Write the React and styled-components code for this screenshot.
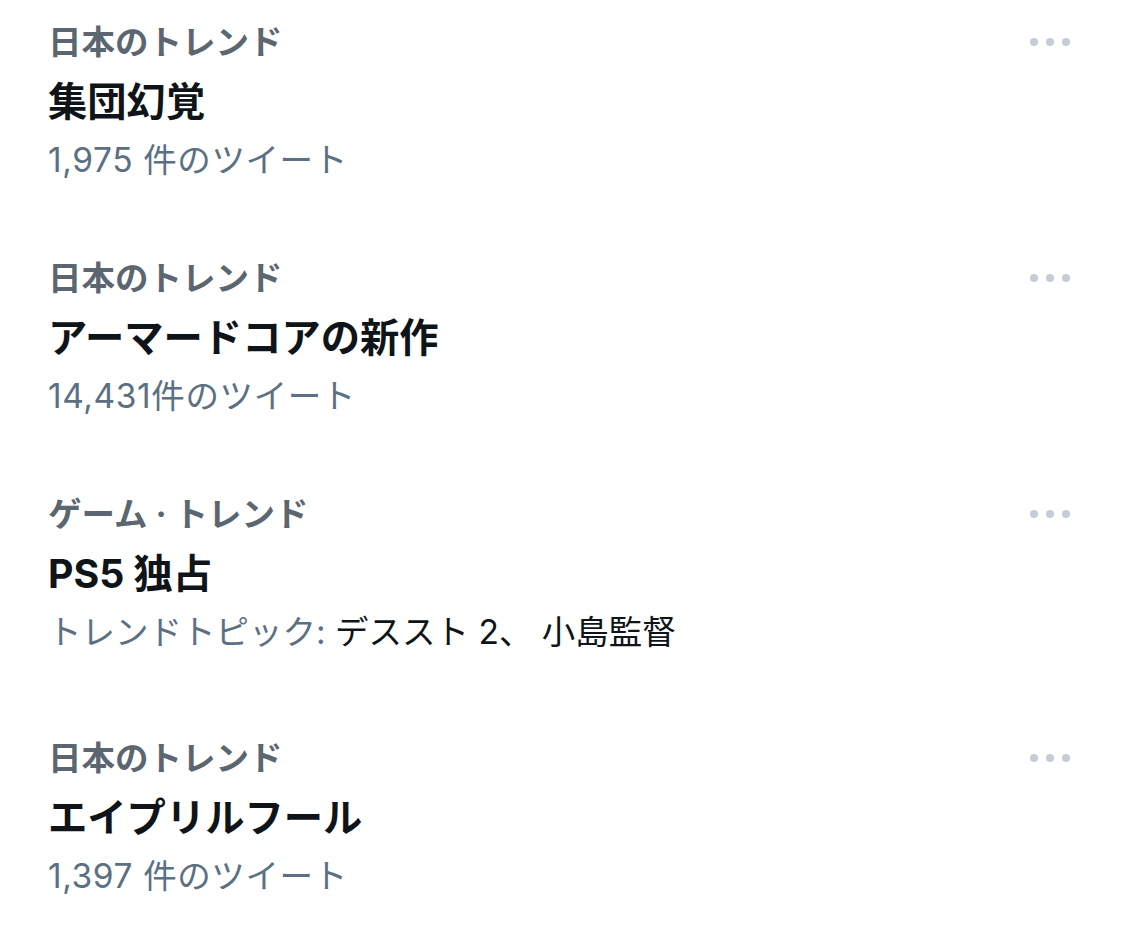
import React from "react";
import styled, { createGlobalStyle } from "styled-components";

const trends = [
  { category: "日本のトレンド", title: "集団幻覚", count: "1,975 件のツイート" },
  { category: "日本のトレンド", title: "アーマードコアの新作", count: "14,431件のツイート" },
  {
    category: "ゲーム · トレンド",
    title: "PS5 独占",
    topicLabel: "トレンドトピック:",
    topics: "デススト 2、 小島監督",
  },
  { category: "日本のトレンド", title: "エイプリルフール", count: "1,397 件のツイート" },
];

const App = () => {
  return (
    <>
      <GlobalStyle />
      <List>
        {trends.map((t, i) => (
          <Item key={i} $tall={!!t.topics}>
            <Body>
              <Category>{t.category}</Category>
              <Title>{t.title}</Title>
              {t.topics ? (
                <Meta $tight>
                  {t.topicLabel} <Topics>{t.topics}</Topics>
                </Meta>
              ) : (
                <Meta>{t.count}</Meta>
              )}
            </Body>
            <MoreButton aria-label="more">
              <Dot />
              <Dot />
              <Dot />
            </MoreButton>
          </Item>
        ))}
      </List>
    </>
  );
};

export default App;

const GlobalStyle = createGlobalStyle`
  html, body {
    margin: 0;
    padding: 0;
    background: #ffffff;
  }
  body {
    font-family: Inter, "Noto Sans CJK JP", sans-serif;
    -webkit-font-smoothing: antialiased;
  }
`;

const List = styled.div`
  display: flex;
  flex-direction: column;
  padding: 13px 55px 0 48px;
`;

const Item = styled.div`
  display: flex;
  justify-content: space-between;
  align-items: flex-start;
  padding-bottom: ${(p) => (p.$tall ? "70px" : "62px")};
`;

const Body = styled.div`
  display: flex;
  flex-direction: column;
`;

const Category = styled.div`
  font-size: 33.5px;
  line-height: 58px;
  font-weight: 700;
  color: #5b6670;
`;

const Title = styled.div`
  font-size: 39.3px;
  line-height: 62px;
  font-weight: 700;
  color: #0f1419;
`;

const Meta = styled.div`
  font-size: 33.5px;
  line-height: 54px;
  font-weight: 400;
  letter-spacing: ${(p) => (p.$tight ? "0" : "0.6px")};
  color: #5b7083;
`;

const Topics = styled.span`
  color: #0f1419;
`;

const MoreButton = styled.div`
  display: flex;
  align-items: center;
  gap: 8px;
  height: 58px;
`;

const Dot = styled.span`
  width: 8px;
  height: 8px;
  border-radius: 50%;
  background: #c3cdd6;
`;
